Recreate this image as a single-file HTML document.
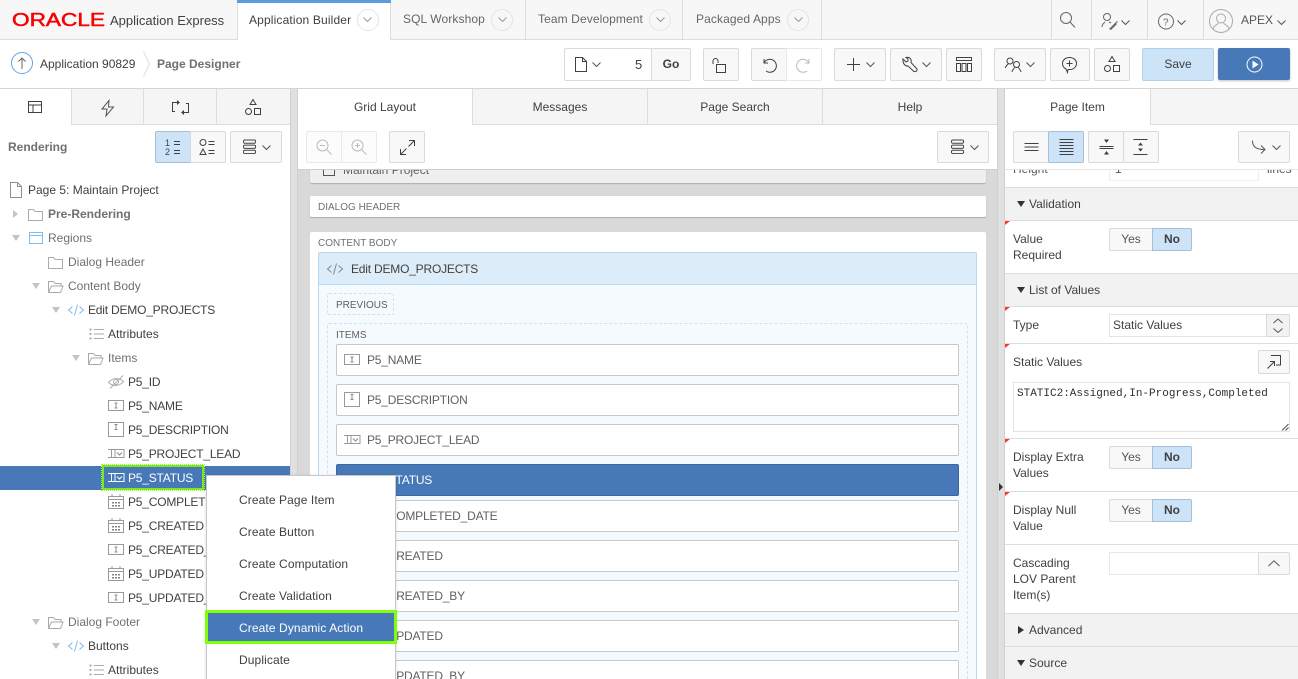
<!DOCTYPE html>
<html><head><meta charset="utf-8"><style>
html{margin:0;padding:0;width:1298px;height:679px;overflow:hidden}
body{margin:0;padding:0;width:1298px;height:679px;overflow:hidden;position:relative;background:#fff;font:12px/16px "Liberation Sans",sans-serif;color:#404040}
div,svg{position:absolute;box-sizing:border-box}
svg{overflow:visible;fill:none;stroke:#404040;stroke-width:1}
.t{white-space:nowrap;line-height:16px;margin-top:-8px}
.tab{top:0;height:39px;border-right:1px solid #ddd;line-height:39px;color:#666;padding-left:12px;white-space:nowrap;letter-spacing:.1px}
.circ{width:22px;height:22px;border:1px solid #e4e4e4;border-radius:50%;top:9px}
.b{background:#f8f8f8;border:1px solid #dadada;border-radius:2px;text-align:center;color:#404040}
.ptab{top:89px;height:36px;background:#f5f5f5;border-right:1px solid #ddd;border-bottom:1px solid #ddd;text-align:center;line-height:36px;color:#404040}
.act{background:#fff;border-bottom:0;height:36px}
.g{color:#707070}
.k{color:#404040}
.c{letter-spacing:-.2px}
.it{left:336px;width:623px;height:32px;background:#fff;border:1px solid #c9c9c9;border-radius:2px;line-height:30px;padding-left:30px;color:#606060;white-space:nowrap;letter-spacing:-.2px}
.sec{left:1005px;width:293px;height:34px;background:#f2f2f2;border-top:1px solid #ddd;border-bottom:1px solid #ddd;line-height:32px;padding-left:24px;color:#404040}
.l{left:1013px;color:#404040;white-space:nowrap;line-height:16px}
.red{left:1005px;width:0;height:0;border-top:4px solid #f33;border-right:5px solid transparent}
.y{left:1109px;width:44px;height:23px;background:#f8f8f8;border:1px solid #dadada;border-radius:2px 0 0 2px;text-align:center;line-height:20px;color:#555}
.n{left:1152px;width:40px;height:23px;background:#cce3f8;border:1px solid #a7bfd6;border-radius:0 2px 2px 0;text-align:center;line-height:20px;font-weight:bold;color:#404040}
.m{left:239px;white-space:nowrap;color:#404040;letter-spacing:.1px}
.tri{width:0;height:0}
.td{border-left:4px solid transparent;border-right:4px solid transparent;border-top:6px solid #c4c4c4}
.tr{border-top:4px solid transparent;border-bottom:4px solid transparent;border-left:5px solid #c4c4c4}
.hr{left:1005px;width:293px;height:1px;background:#ddd}
</style></head><body>
<svg width="0" height="0" style="left:0;top:0"><defs>
<symbol id="page" viewBox="0 0 14 16" overflow="visible"><path d="M1.500 .5h7l4 4v11h-11zM8.500 .5v4h4" fill="none" stroke="#909090"/></symbol>
<symbol id="folder" viewBox="0 0 15 12" overflow="visible"><path d="M.5 11.500v-11h5l1.500 2h7.500v9z" fill="none" stroke="#aaa"/></symbol>
<symbol id="ofolder" viewBox="0 0 16 12" overflow="visible"><path d="M.5 11.500v-11h5l1.500 2h6v2M.5 11.500l3-6.500h11.500l-2.500 6.500z" fill="none" stroke="#aaa"/></symbol>
<symbol id="code" viewBox="0 0 16 12" overflow="visible"><path d="M4.500 2.500l-4 3.500 4 3.500M11.500 2.500l4 3.500-4 3.500M9.500 .5l-3 11" fill="none" stroke="#7dbcf0"/></symbol>
<symbol id="code2" viewBox="0 0 16 12" overflow="visible"><path d="M4.500 2.500l-4 3.500 4 3.500M11.500 2.500l4 3.500-4 3.500M9.500 .5l-3 11" fill="none" stroke="#888"/></symbol>
<symbol id="list" viewBox="0 0 15 12" overflow="visible"><path d="M5 1.500h10M5 6h10M5 10.500h10" fill="none" stroke="#aaa"/><circle cx="1.500" cy="1.500" r="1.100" fill="#aaa" stroke="none"/><circle cx="1.500" cy="6" r="1.100" fill="#aaa" stroke="none"/><circle cx="1.500" cy="10.500" r="1.100" fill="#aaa" stroke="none"/></symbol>
<symbol id="text" viewBox="0 0 16 12" overflow="visible"><rect x=".5" y=".5" width="15" height="10" fill="none" stroke="#999"/><path d="M6.500 3h3M8 3v5M6.500 8h3" fill="none" stroke="#888"/></symbol>
<symbol id="area" viewBox="0 0 16 15" overflow="visible"><rect x=".5" y=".5" width="15" height="14" fill="none" stroke="#999"/><path d="M6.500 2.500h3M8 2.500v5M6.500 7.500h3" fill="none" stroke="#888"/></symbol>
<symbol id="sel" viewBox="0 0 16 12" overflow="visible"><path d="M0 1.500h7M3.500 1.500v8M0 9.500h16V1.500H7v8" fill="none" stroke="#999"/><path d="M9 4.500l2.500 2.500L14 4.500" fill="none" stroke="#888"/></symbol>
<symbol id="selw" viewBox="0 0 16 12" overflow="visible"><path d="M0 1.500h7M3.500 1.500v8M0 9.500h16V1.500H7v8" fill="none" stroke="#fff"/><path d="M9 4.500l2.500 2.500L14 4.500" fill="none" stroke="#fff"/></symbol>
<symbol id="cal" viewBox="0 0 16 15" overflow="visible"><path d="M.5 2.500h15v12H.5zM.5 5.500h15M4 0v2.500M12 0v2.500" fill="none" stroke="#999"/><path d="M4 8h2v1.500H4zM7 8h2v1.500H7zM10 8h2v1.500h-2zM4 11h2v1.500H4zM7 11h2v1.500H7zM10 11h2v1.500h-2z" fill="#808080" stroke="none"/></symbol>
<symbol id="eye" viewBox="0 0 16 14" overflow="visible"><path d="M.5 7.500c4-5 11-5 15-1-4 5-11 5-15 1zM2 13.500L15 .5" fill="none" stroke="#aaa"/><circle cx="8" cy="7" r="2.500" fill="none" stroke="#aaa"/></symbol>
<symbol id="chev" viewBox="0 0 9 6" overflow="visible"><path d="M.5 .5l4 4 4-4" fill="none" stroke="#555"/></symbol>
<symbol id="chevl" viewBox="0 0 9 6" overflow="visible"><path d="M.5 .5l4 4 4-4" fill="none" stroke="#999"/></symbol>
<symbol id="menu" viewBox="0 0 15 16" overflow="visible"><rect x=".5" y=".5" width="13" height="3.500" rx="1.500" fill="none" stroke="#404040"/><rect x=".5" y="6" width="13" height="3.500" rx="1.500" fill="none" stroke="#404040"/><rect x=".5" y="11.500" width="13" height="3.500" rx="1.500" fill="none" stroke="#404040"/></symbol>
<symbol id="shapes" viewBox="0 0 16 17" overflow="visible"><path d="M8 .5l3 5H5zM9.500 9.500h6v6h-6z" fill="none" stroke="#404040"/><circle cx="3.500" cy="12.500" r="3" fill="none" stroke="#404040"/></symbol>
</defs></svg>

<!-- top nav -->
<div style="left:0;top:0;width:1298px;height:40px;background:#f7f7f7;border-bottom:1px solid #ddd"></div>
<svg style="left:12px;top:12px" width="95" height="16"><text x="0" y="14" textLength="93" lengthAdjust="spacingAndGlyphs" style="font:18px 'Liberation Sans',sans-serif;fill:#f80000;stroke:#f80000;stroke-width:.5">ORACLE</text></svg>
<div class="t" style="left:110px;top:21px;font-size:13px;color:#404040">Application Express</div>
<div style="left:237px;top:0;width:154px;height:40px;background:#fff;border-left:1px solid #ddd;border-right:1px solid #ddd"></div>
<div style="left:237px;top:0;width:154px;height:3px;background:#5b9be0"></div>
<div class="t" style="left:249px;top:20px;color:#404040;letter-spacing:.15px">Application Builder</div>
<div class="circ" style="left:357px"></div><svg style="left:363px;top:17px" width="9" height="6"><use href="#chevl" width="9" height="6"/></svg>
<div class="tab" style="left:391px;width:135px">SQL Workshop</div>
<div class="circ" style="left:491px"></div><svg style="left:498px;top:17px" width="9" height="6"><use href="#chevl" width="9" height="6"/></svg>
<div class="tab" style="left:526px;width:157px">Team Development</div>
<div class="circ" style="left:649px"></div><svg style="left:656px;top:17px" width="9" height="6"><use href="#chevl" width="9" height="6"/></svg>
<div class="tab" style="left:683px;width:139px;padding-left:13px">Packaged Apps</div>
<div class="circ" style="left:787px"></div><svg style="left:794px;top:17px" width="9" height="6"><use href="#chevl" width="9" height="6"/></svg>
<div style="left:1051px;top:0;width:1px;height:39px;background:#ddd"></div>
<div style="left:1091px;top:0;width:1px;height:39px;background:#ddd"></div>
<div style="left:1147px;top:0;width:1px;height:39px;background:#ddd"></div>
<div style="left:1203px;top:0;width:1px;height:39px;background:#ddd"></div>
<svg style="left:1060px;top:12px" width="16" height="16"><circle cx="6" cy="6" r="5.500" stroke="#666"/><path d="M10 10l5 5.500" stroke="#666"/></svg>
<svg style="left:1101px;top:13px" width="18" height="18"><circle cx="6" cy="4" r="3.500" stroke="#666"/><path d="M1 14c0-3 2-4 3-5M8 9l2 1" stroke="#666"/><path d="M8 16l6-6 2-2 1 1-2 1 1 1-2 2-4 4z" fill="#666" stroke="none"/></svg>
<svg style="left:1121px;top:20px" width="9" height="6"><use href="#chev" width="9" height="6"/></svg>
<svg style="left:1158px;top:13px" width="16" height="17"><circle cx="8" cy="8.500" r="7.500" stroke="#666"/><text x="5" y="12.500" style="font:10px 'Liberation Sans',sans-serif;fill:#666;stroke:none">?</text></svg>
<svg style="left:1177px;top:20px" width="9" height="6"><use href="#chev" width="9" height="6"/></svg>
<svg style="left:1209px;top:9px" width="24" height="24"><circle cx="12" cy="12" r="11.500" stroke="#aaa"/><circle cx="12" cy="9.500" r="4.500" stroke="#aaa"/><path d="M4 20c1-4 4-4 5.500-6M20 20c-1-4-4-4-5.500-6" stroke="#aaa"/></svg>
<div class="t" style="left:1241px;top:20px;color:#555">APEX</div>
<svg style="left:1277px;top:20px" width="9" height="6"><use href="#chev" width="9" height="6"/></svg>

<!-- toolbar -->
<div style="left:0;top:88px;width:1298px;height:1px;background:#d5d5d5"></div>
<svg style="left:11px;top:52px" width="22" height="22"><circle cx="11" cy="11" r="10.500" stroke="#5aa5ea"/><path d="M11 17V6M7.500 9.500L11 6l3.500 3.500" stroke="#666"/></svg>
<div class="t" style="left:40px;top:64px;color:#404040">Application 90829</div>
<svg style="left:143px;top:51px" width="8" height="26"><path d="M.5 .5l6 12.500-6 12.500" stroke="#ddd"/></svg>
<div class="t" style="left:157px;top:64px;font-weight:bold;color:#707070">Page Designer</div>

<div class="b" style="left:564px;top:48px;width:88px;height:33px;background:#fff"></div>
<svg style="left:575px;top:57px" width="12" height="15"><path d="M.5 .5h7l4 4v10H.5zM7.500 .5v4h4" stroke="#404040"/></svg>
<svg style="left:592px;top:62px" width="9" height="6"><use href="#chev" width="9" height="6"/></svg>
<div class="t" style="left:635px;top:65px;font-size:13px">5</div>
<div class="b" style="left:651px;top:48px;width:40px;height:33px;font-weight:bold;line-height:30px">Go</div>
<div class="b" style="left:703px;top:48px;width:36px;height:33px"></div>
<svg style="left:712px;top:58px" width="16" height="15"><path d="M1 6V3a2.500 2.500 0 0 1 5 0v2" stroke="#404040"/><rect x="4.500" y="6.500" width="9" height="8" stroke="#404040"/></svg>
<div class="b" style="left:751px;top:48px;width:36px;height:33px"></div>
<svg style="left:761px;top:57px" width="16" height="16"><path d="M3 2v4h4M3 6a6.500 6.500 0 1 1 2 8" stroke="#404040"/></svg>
<div class="b" style="left:786px;top:48px;width:36px;height:33px;background:#fff;border-color:#e8e8e8"></div>
<svg style="left:796px;top:57px" width="16" height="16"><path d="M13 2v4H9M13 6a6.500 6.500 0 1 0-2 8" stroke="#bbb"/></svg>
<div class="b" style="left:834px;top:48px;width:52px;height:33px"></div>
<svg style="left:847px;top:58px" width="13" height="13"><path d="M6.500 0v13M0 6.500h13" stroke="#404040"/></svg>
<svg style="left:866px;top:62px" width="9" height="6"><use href="#chev" width="9" height="6"/></svg>
<div class="b" style="left:890px;top:48px;width:52px;height:33px"></div>
<svg style="left:902px;top:57px" width="16" height="16"><path d="M1 2l3 3 2-1 0-2-2-1.500c3-1 6 1 5 5l6 6.500c.5 2-1.500 3-3 2.500L6 9C3 9.500 .5 6 1 2z" stroke="#404040"/></svg>
<svg style="left:922px;top:62px" width="9" height="6"><use href="#chev" width="9" height="6"/></svg>
<div class="b" style="left:946px;top:48px;width:36px;height:33px"></div>
<svg style="left:956px;top:57px" width="16" height="15"><path d="M.5 .5h15v3H.5zM.5 6.500h4v8h-4zM6 6.500h4v8H6zM11.500 6.500h4v8h-4z" stroke="#404040"/></svg>
<div class="b" style="left:994px;top:48px;width:52px;height:33px"></div>
<svg style="left:1005px;top:57px" width="18" height="16"><circle cx="5" cy="4" r="3" stroke="#404040"/><circle cx="11.500" cy="7.500" r="3" stroke="#404040"/><path d="M.5 11c0-2 2-3 2.500-4M7 15c0-2 2-3 2.500-4.500M16 15c0-2-2-3-2.500-4.500" stroke="#404040"/></svg>
<svg style="left:1026px;top:62px" width="9" height="6"><use href="#chev" width="9" height="6"/></svg>
<div class="b" style="left:1050px;top:48px;width:40px;height:33px"></div>
<svg style="left:1062px;top:57px" width="15" height="16"><path d="M7.500 .5c4 0 7 2.500 7 6s-3 6-6.500 6c-.8 0-1.500 0-2 0l-.5 3-1.500-3.500C2 11 .5 9 .5 6.500c0-3.500 3-6 7-6z" stroke="#404040"/><path d="M7.500 3.500v6M4.500 6.500h6" stroke="#404040"/></svg>
<div class="b" style="left:1094px;top:48px;width:36px;height:33px"></div>
<svg style="left:1104px;top:56px" width="16" height="17"><use href="#shapes" width="16" height="17"/></svg>
<div class="b" style="left:1142px;top:48px;width:72px;height:33px;background:#cce3f8;border-color:#b3d0ea;line-height:30px;color:#404040">Save</div>
<div style="left:1218px;top:48px;width:72px;height:32px;background:#4779b8;border-radius:2px;box-shadow:0 1px 2px rgba(0,0,0,.25)"></div>
<svg style="left:1246px;top:56px" width="17" height="17"><circle cx="8.500" cy="8.500" r="7.500" stroke="#fff"/><path d="M6.500 4.500l6 4-6 4z" fill="#fff" stroke="none"/></svg>

<!-- gutters -->
<div style="left:290px;top:89px;width:8px;height:590px;background:#e0e0e0;border-left:1px solid #d0d0d0;border-right:1px solid #d0d0d0"></div>
<div style="left:997px;top:89px;width:8px;height:590px;background:#e0e0e0;border-left:1px solid #d0d0d0;border-right:1px solid #d0d0d0"></div>
<div class="tri" style="left:999px;top:483px;border-top:4px solid transparent;border-bottom:4px solid transparent;border-left:4px solid #333"></div>

<!-- left tabs -->
<div class="ptab act" style="left:0;width:72px"></div>
<div class="ptab" style="left:72px;width:72px"></div>
<div class="ptab" style="left:144px;width:73px"></div>
<div class="ptab" style="left:217px;width:73px;border-right:0"></div>
<svg style="left:28px;top:101px" width="15" height="13"><path d="M.5 .5h13v11H.5zM.5 4h13M5 4v7.500" stroke="#404040"/></svg>
<svg style="left:101px;top:100px" width="14" height="17"><path d="M8 .5L1 9h5l-1 7 7.500-9H7.500z" stroke="#555"/></svg>
<svg style="left:172px;top:100px" width="17" height="15"><path d="M6 2.500H.5v9H3M11 12.500h5.500v-9H14" stroke="#404040"/><path d="M5 0l3 2.500L5 5zM12 10l-3 2.500 3 2.500z" fill="#404040" stroke="none"/></svg>
<svg style="left:245px;top:99px" width="16" height="17"><use href="#shapes" width="16" height="17"/></svg>

<!-- center tabs -->
<div class="ptab act" style="left:298px;width:175px;border-right:1px solid #ddd">Grid Layout</div>
<div class="ptab" style="left:473px;width:175px">Messages</div>
<div class="ptab" style="left:648px;width:175px">Page Search</div>
<div class="ptab" style="left:823px;width:174px;border-right:0">Help</div>
<!-- right tabs -->
<div style="left:1005px;top:89px;width:293px;height:36px;background:#f5f5f5;border-bottom:1px solid #ddd"></div>
<div class="ptab act" style="left:1005px;width:146px;border-right:1px solid #ddd">Page Item</div>

<!-- left toolbar -->
<div class="t" style="left:8px;top:147px;font-weight:bold;color:#707070">Rendering</div>
<div class="b" style="left:155px;top:131px;width:36px;height:32px;background:#cce3f8;border-color:#a7bfd6"></div>
<svg style="left:165px;top:139px" width="17" height="17"><text x="0" y="7" style="font:9px 'Liberation Sans',sans-serif;fill:#404040;stroke:none">1</text><text x="0" y="16" style="font:9px 'Liberation Sans',sans-serif;fill:#404040;stroke:none">2</text><path d="M9 2.500h6M9 5.500h6M9 11.500h6M9 14.500h6" stroke="#404040"/></svg>
<div class="b" style="left:190px;top:131px;width:36px;height:32px"></div>
<svg style="left:199px;top:139px" width="17" height="17"><circle cx="4" cy="3.500" r="3" stroke="#404040"/><path d="M4 10l3 5.500H1zM9.500 2.500h6M9.500 5.500h6M9.500 11.500h6M9.500 14.500h6" stroke="#404040"/></svg>
<div class="b" style="left:230px;top:131px;width:52px;height:32px"></div>
<svg style="left:243px;top:139px" width="14" height="16"><use href="#menu" width="14" height="16"/></svg>
<svg style="left:262px;top:145px" width="9" height="6"><use href="#chev" width="9" height="6"/></svg>

<!-- tree -->
<svg style="left:9px;top:182px" width="14" height="16"><use href="#page" width="14" height="16"/></svg>
<div class="t k" style="left:28px;top:190px">Page 5: Maintain Project</div>
<div class="tri tr" style="left:13px;top:210px"></div>
<svg style="left:28px;top:209px" width="15" height="12"><use href="#folder" width="15" height="12"/></svg>
<div class="t" style="left:48px;top:214px;font-weight:bold;color:#707070">Pre-Rendering</div>
<div class="tri td" style="left:12px;top:235px"></div>
<svg style="left:29px;top:232px" width="15" height="12"><rect x=".5" y=".5" width="13" height="11" stroke="#7dbcf0"/><path d="M.5 3.500h13" stroke="#7dbcf0"/></svg>
<div class="t g" style="left:48px;top:238px">Regions</div>
<svg style="left:48px;top:257px" width="15" height="12"><use href="#folder" width="15" height="12"/></svg>
<div class="t g" style="left:68px;top:262px">Dialog Header</div>
<div class="tri td" style="left:32px;top:283px"></div>
<svg style="left:48px;top:281px" width="16" height="12"><use href="#ofolder" width="16" height="12"/></svg>
<div class="t g" style="left:68px;top:286px">Content Body</div>
<div class="tri td" style="left:52px;top:307px"></div>
<svg style="left:68px;top:304px" width="16" height="12"><use href="#code" width="16" height="12"/></svg>
<div class="t k c" style="left:88px;top:310px">Edit DEMO_PROJECTS</div>
<svg style="left:89px;top:328px" width="15" height="12"><use href="#list" width="15" height="12"/></svg>
<div class="t k" style="left:108px;top:334px">Attributes</div>
<div class="tri td" style="left:72px;top:355px"></div>
<svg style="left:88px;top:353px" width="16" height="12"><use href="#ofolder" width="16" height="12"/></svg>
<div class="t g" style="left:108px;top:358px">Items</div>
<svg style="left:108px;top:375px" width="16" height="14"><use href="#eye" width="16" height="14"/></svg>
<div class="t k c" style="left:128px;top:382px">P5_ID</div>
<svg style="left:108px;top:400px" width="16" height="12"><use href="#text" width="16" height="12"/></svg>
<div class="t k c" style="left:128px;top:406px">P5_NAME</div>
<svg style="left:108px;top:422px" width="16" height="15"><use href="#area" width="16" height="15"/></svg>
<div class="t k c" style="left:128px;top:430px">P5_DESCRIPTION</div>
<svg style="left:108px;top:448px" width="16" height="12"><use href="#sel" width="16" height="12"/></svg>
<div class="t k c" style="left:128px;top:454px">P5_PROJECT_LEAD</div>
<div style="left:0;top:466px;width:290px;height:24px;background:#4779b8"></div>
<div style="left:102px;top:465px;width:102px;height:25px;border:2px solid #7fe81a;outline:1px dotted #90ff30"></div>
<svg style="left:108px;top:472px" width="16" height="12"><use href="#selw" width="16" height="12"/></svg>
<div class="t c" style="left:128px;top:478px;color:#fff">P5_STATUS</div>
<svg style="left:108px;top:494px" width="16" height="15"><use href="#cal" width="16" height="15"/></svg>
<div class="t k c" style="left:128px;top:502px">P5_COMPLETED_DATE</div>
<svg style="left:108px;top:518px" width="16" height="15"><use href="#cal" width="16" height="15"/></svg>
<div class="t k c" style="left:128px;top:526px">P5_CREATED</div>
<svg style="left:108px;top:544px" width="16" height="12"><use href="#text" width="16" height="12"/></svg>
<div class="t k c" style="left:128px;top:550px">P5_CREATED_BY</div>
<svg style="left:108px;top:566px" width="16" height="15"><use href="#cal" width="16" height="15"/></svg>
<div class="t k c" style="left:128px;top:574px">P5_UPDATED</div>
<svg style="left:108px;top:592px" width="16" height="12"><use href="#text" width="16" height="12"/></svg>
<div class="t k c" style="left:128px;top:598px">P5_UPDATED_BY</div>
<div class="tri td" style="left:32px;top:619px"></div>
<svg style="left:48px;top:617px" width="16" height="12"><use href="#ofolder" width="16" height="12"/></svg>
<div class="t g" style="left:68px;top:622px">Dialog Footer</div>
<div class="tri td" style="left:52px;top:643px"></div>
<svg style="left:68px;top:640px" width="16" height="12"><use href="#code" width="16" height="12"/></svg>
<div class="t k" style="left:88px;top:646px">Buttons</div>
<svg style="left:89px;top:664px" width="15" height="12"><use href="#list" width="15" height="12"/></svg>
<div class="t k" style="left:108px;top:670px">Attributes</div>

<!-- center -->
<div style="left:298px;top:169px;width:699px;height:510px;background:#d9d9d9;border-top:1px solid #cfcfcf;overflow:hidden">
<div style="left:12px;top:-10px;width:676px;height:23px;background:#eeeff1;border-radius:2px;box-shadow:0 1px 1px rgba(0,0,0,.2)"></div>
<div class="t" style="left:45px;top:0;color:#606060">Maintain Project</div>
<div style="left:25px;top:-8px;width:12px;height:14px;border:1px solid #555;background:#eeeff1"></div>
<div style="left:12px;top:26px;width:676px;height:21px;background:#fff;border-radius:2px;box-shadow:0 1px 1px rgba(0,0,0,.2)"></div>
<div class="t" style="left:20px;top:38px;font-size:10px;color:#707070">DIALOG HEADER</div>
<div style="left:12px;top:62px;width:676px;height:460px;background:#fff;border-radius:2px"></div>
<div class="t" style="left:20px;top:74px;font-size:10px;color:#707070">CONTENT BODY</div>
<div style="left:20px;top:82px;width:659px;height:430px;background:#f5fafe;border:1px solid #b7d9f3;border-radius:2px"></div>
<div style="left:20px;top:82px;width:659px;height:33px;background:#dcecf9;border:1px solid #b7d9f3;border-radius:2px 2px 0 0"></div>
</div>
<svg style="left:327px;top:263px" width="16" height="12"><use href="#code2" width="16" height="12"/></svg>
<div class="t c" style="left:351px;top:269px;color:#404040">Edit DEMO_PROJECTS</div>
<div style="left:327px;top:293px;width:67px;height:22px;border:1px dashed #cde3f5;border-radius:2px"></div>
<div class="t" style="left:336px;top:306px;font-size:10px;color:#606060">PREVIOUS</div>
<div style="left:327px;top:323px;width:641px;height:380px;border:1px dashed #cde3f5;border-radius:2px"></div>
<div class="t" style="left:336px;top:336px;font-size:10px;color:#606060">ITEMS</div>
<div class="it" style="top:344px">P5_NAME</div>
<svg style="left:344px;top:354px" width="16" height="12"><use href="#text" width="16" height="12"/></svg>
<div class="it" style="top:384px">P5_DESCRIPTION</div>
<svg style="left:344px;top:392px" width="16" height="15"><use href="#area" width="16" height="15"/></svg>
<div class="it" style="top:424px">P5_PROJECT_LEAD</div>
<svg style="left:344px;top:434px" width="16" height="12"><use href="#sel" width="16" height="12"/></svg>
<div class="it" style="top:464px;background:#4779b8;border-color:#3b679e;color:#fff">P5_STATUS</div>
<div class="it" style="top:500px">P5_COMPLETED_DATE</div>
<div class="it" style="top:540px">P5_CREATED</div>
<div class="it" style="top:580px">P5_CREATED_BY</div>
<div class="it" style="top:620px">P5_UPDATED</div>
<div class="it" style="top:660px">P5_UPDATED_BY</div>

<!-- center toolbar -->
<div style="left:298px;top:125px;width:699px;height:44px;background:#fff"></div>
<div class="b" style="left:306px;top:131px;width:36px;height:32px;background:#fcfcfc;border-color:#eaeaea"></div>
<svg style="left:316px;top:139px" width="16" height="16"><circle cx="6.500" cy="6.500" r="5.500" stroke="#bbb"/><path d="M4 6.500h5M10.500 10.500l5 5" stroke="#bbb"/></svg>
<div class="b" style="left:341px;top:131px;width:36px;height:32px;background:#fcfcfc;border-color:#eaeaea"></div>
<svg style="left:351px;top:139px" width="16" height="16"><circle cx="6.500" cy="6.500" r="5.500" stroke="#bbb"/><path d="M4 6.500h5M6.500 4v5M10.500 10.500l5 5" stroke="#bbb"/></svg>
<div class="b" style="left:389px;top:131px;width:36px;height:32px"></div>
<svg style="left:400px;top:140px" width="15" height="15"><path d="M14 1L8.500 6.500M9 .5h5.500V6M1 14l5.500-5.500M.5 9v5.500H6" stroke="#404040"/></svg>
<div class="b" style="left:937px;top:131px;width:52px;height:32px"></div>
<svg style="left:951px;top:139px" width="14" height="16"><use href="#menu" width="14" height="16"/></svg>
<svg style="left:970px;top:145px" width="9" height="6"><use href="#chev" width="9" height="6"/></svg>

<!-- right toolbar -->
<div class="b" style="left:1013px;top:131px;width:36px;height:32px"></div>
<svg style="left:1024px;top:141px" width="16" height="12"><path d="M.5 2.500h14M.5 6h14M.5 9.500h14" stroke="#404040"/></svg>
<div class="b" style="left:1048px;top:131px;width:36px;height:32px;background:#cce3f8;border-color:#a7bfd6"></div>
<svg style="left:1059px;top:139px" width="16" height="16"><path d="M.5 .5h14M.5 3.500h14M.5 6.500h14M.5 9.500h14M.5 12.500h14M.5 15.500h14" stroke="#404040"/></svg>
<div class="b" style="left:1088px;top:131px;width:36px;height:32px"></div>
<svg style="left:1099px;top:139px" width="16" height="16"><path d="M.5 7.500h14M.5 9.500h14" stroke="#404040"/><path d="M5 .5h5L7.500 4zM5 15.500h5L7.500 12z" fill="#404040" stroke="none"/></svg>
<div class="b" style="left:1123px;top:131px;width:36px;height:32px"></div>
<svg style="left:1133px;top:139px" width="16" height="16"><path d="M.5 .5h14M.5 15.500h14" stroke="#404040"/><path d="M5 6.500h5L7.500 3.500zM5 9.500h5l-2.500 3z" fill="#404040" stroke="none"/></svg>
<div class="b" style="left:1238px;top:131px;width:52px;height:32px"></div>
<svg style="left:1252px;top:140px" width="15" height="15"><path d="M.5 .5c0 6 3 9 12 9M9 5.500l4 4-4 4" stroke="#555"/></svg>
<svg style="left:1272px;top:145px" width="9" height="6"><use href="#chev" width="9" height="6"/></svg>
<div class="hr" style="top:169px;background:#e4e4e4"></div>

<!-- right body -->
<div class="t" style="left:1013px;top:169px;color:#555;clip-path:inset(9px 0 0 0)">Height</div>
<div style="left:1109px;top:170px;width:150px;height:11px;border:1px solid #eee;border-top:0;background:#fff"></div>
<div class="t" style="left:1115px;top:169px;color:#555;clip-path:inset(9px 0 0 0)">1</div>
<div class="t" style="left:1267px;top:169px;color:#555;clip-path:inset(9px 0 0 0)">lines</div>

<div class="sec" style="top:187px">Validation</div>
<div class="tri" style="left:1017px;top:201px;border-left:4px solid transparent;border-right:4px solid transparent;border-top:6px solid #333"></div>
<div class="red" style="top:221px"></div>
<div class="l" style="top:231px">Value<br>Required</div>
<div class="y" style="top:228px">Yes</div><div class="n" style="top:228px">No</div>

<div class="sec" style="top:273px">List of Values</div>
<div class="tri" style="left:1017px;top:287px;border-left:4px solid transparent;border-right:4px solid transparent;border-top:6px solid #333"></div>
<div class="red" style="top:307px"></div>
<div class="l" style="top:317px">Type</div>
<div style="left:1109px;top:314px;width:158px;height:23px;background:#fff;border:1px solid #e4e4e4;line-height:20px;padding-left:3px;color:#404040">Static Values</div>
<div class="b" style="left:1266px;top:314px;width:24px;height:23px;background:#f2f2f2"></div>
<svg style="left:1273px;top:318px" width="10" height="16"><path d="M.5 5l4.500-4 4.500 4M.5 10.500l4.500 4 4.500-4" stroke="#555"/></svg>
<div class="hr" style="top:343px"></div>
<div class="red" style="top:344px"></div>
<div class="l" style="top:354px">Static Values</div>
<div class="b" style="left:1258px;top:350px;width:32px;height:24px"></div>
<svg style="left:1267px;top:355px" width="14" height="14"><path d="M4 .5h9.500v9.500H9M.5 13.500L7 7M3 6.500h4.500V11" stroke="#404040"/></svg>
<div style="left:1013px;top:382px;width:277px;height:50px;background:#fff;border:1px solid #e4e4e4;padding:3px 3px;font:11px/16px 'Liberation Mono',monospace;color:#303030;white-space:nowrap">STATIC2:Assigned,In-Progress,Completed</div>
<svg style="left:1282px;top:424px" width="7" height="7"><path d="M0 6.500L6.500 0M3.500 6.500l3-3" stroke="#555"/></svg>
<div class="hr" style="top:438px"></div>
<div class="red" style="top:439px"></div>
<div class="l" style="top:449px">Display Extra<br>Values</div>
<div class="y" style="top:446px">Yes</div><div class="n" style="top:446px">No</div>
<div class="hr" style="top:491px"></div>
<div class="red" style="top:492px"></div>
<div class="l" style="top:502px">Display Null<br>Value</div>
<div class="y" style="top:499px">Yes</div><div class="n" style="top:499px">No</div>
<div class="hr" style="top:544px"></div>
<div class="l" style="top:555px">Cascading<br>LOV Parent<br>Item(s)</div>
<div style="left:1109px;top:552px;width:150px;height:23px;background:#fff;border:1px solid #e8e8e8"></div>
<div class="b" style="left:1258px;top:552px;width:32px;height:23px"></div>
<svg style="left:1268px;top:560px" width="12" height="7"><path d="M.5 6L6 .8 11.500 6" stroke="#555"/></svg>
<div class="sec" style="top:613px">Advanced</div>
<div class="tri" style="left:1018px;top:626px;border-top:4px solid transparent;border-bottom:4px solid transparent;border-left:6px solid #333"></div>
<div class="sec" style="top:646px">Source</div>
<div class="tri" style="left:1017px;top:660px;border-left:4px solid transparent;border-right:4px solid transparent;border-top:6px solid #333"></div>

<!-- context menu -->
<div style="left:206px;top:475px;width:190px;height:210px;background:#fff;border:1px solid #c8c8c8;box-shadow:0 1px 3px rgba(0,0,0,.15)"></div>
<div class="t m" style="top:500px">Create Page Item</div>
<div class="t m" style="top:532px">Create Button</div>
<div class="t m" style="top:564px">Create Computation</div>
<div class="t m" style="top:596px">Create Validation</div>
<div style="left:205px;top:610px;width:192px;height:34px;background:#4779b8;border:3px solid #7fff0a"></div>
<div class="t m" style="top:628px;color:#fff">Create Dynamic Action</div>
<div class="t m" style="top:660px">Duplicate</div>
</body></html>
